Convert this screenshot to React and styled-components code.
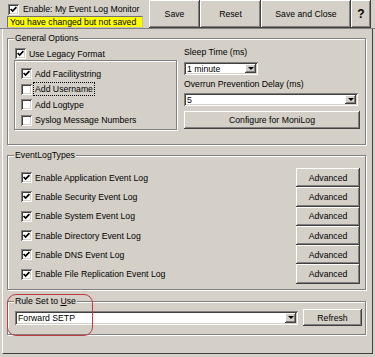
import styled, { createGlobalStyle, css } from "styled-components";

const GlobalStyle = createGlobalStyle`
  html, body {
    margin: 0;
    padding: 0;
    background: #d4d0c8;
  }
  body {
    font-family: "Liberation Sans", Arial, sans-serif;
    font-size: 8.7px;
    color: #000;
  }
  * { box-sizing: border-box; }
`;

const raised = css`
  box-shadow: inset -1px -1px #404040, inset 1px 1px #fff, inset -2px -2px #808080;
`;

const sunken = css`
  box-shadow: inset 1px 1px #808080, inset -1px -1px #fff, inset 2px 2px #404040,
    inset -2px -2px #d4d0c8;
`;

const Window = styled.div`
  width: 375px;
  height: 357px;
  display: flex;
  flex-direction: column;
`;

const TopBar = styled.div`
  height: 29px;
  display: flex;
  border-bottom: 1px solid #808080;
`;

const StatusArea = styled.div`
  width: 149px;
  padding: 4px 0 0 7px;
  display: flex;
  flex-direction: column;
`;

const EnableRow = styled.div`
  display: flex;
  align-items: center;
  gap: 4px;
  padding-left: 1px;
  height: 11px;
  line-height: 11px;
  white-space: nowrap;
`;

const Warning = styled.div`
  width: 136px;
  height: 12px;
  margin-top: 1px;
  background: #ffff00;
  border: 1px solid;
  border-color: #707070 #c0c0c0 #c0c0c0 #707070;
  padding-left: 2px;
  line-height: 10px;
  white-space: nowrap;
`;

const BarButton = styled.button`
  width: ${(p) => p.$w}px;
  height: 28px;
  padding: 0;
  border: none;
  background: #d4d0c8;
  font: inherit;
  color: #000;
  ${raised}
  ${(p) =>
    p.$bold &&
    css`
      font-weight: bold;
      font-size: 12px;
    `}
`;

const Main = styled.div`
  flex: 1;
  margin: 0 2px 3px;
  border-left: 1px solid #fff;
  border-right: 1px solid #404040;
  border-bottom: 1px solid #404040;
  padding: 8px 6px 0 4px;
  display: flex;
  flex-direction: column;
`;

const Group = styled.div`
  position: relative;
  height: ${(p) => p.$h}px;
  margin-top: ${(p) => p.$mt}px;
  border: 1px solid #808080;
  box-shadow: inset 1px 1px #fff, 1px 1px #fff;
`;

const GroupTitle = styled.div`
  position: absolute;
  top: -6px;
  left: 6px;
  padding: 0 1px;
  line-height: 11px;
  background: #d4d0c8;
  white-space: nowrap;
  z-index: 1;
`;

const GeneralGrid = styled.div`
  display: grid;
  grid-template-columns: 163px 176px;
  column-gap: 7px;
  padding: 0 5px 0 6px;
`;

const Column = styled.div`
  display: flex;
  flex-direction: column;
`;

const CheckRow = styled.div`
  display: flex;
  align-items: center;
  gap: 3px;
  height: ${(p) => p.$h || 11}px;
  margin-top: ${(p) => p.$mt || 0}px;
  padding-left: ${(p) => p.$pl || 0}px;
  white-space: nowrap;
`;

const InnerBox = styled.div`
  height: 70px;
  margin-top: 1px;
  padding: 5px 0 0 6px;
  border: 1px solid #808080;
  box-shadow: inset 1px 1px #fff, 1px 1px #fff;
`;

const CheckBox = styled.span`
  width: 11px;
  height: 11px;
  flex: none;
  background: #fff;
  display: grid;
  place-items: center;
  ${sunken}
`;

const Focus = styled.span`
  outline: 1px dotted #000;
  outline-offset: 1px;
`;

const FieldLabel = styled.div`
  line-height: 11px;
  margin-top: ${(p) => p.$mt}px;
  white-space: nowrap;
`;

const Select = styled.div`
  width: ${(p) => p.$w}px;
  height: ${(p) => p.$h}px;
  margin-top: ${(p) => p.$mt || 0}px;
  flex: none;
  display: flex;
  padding: 2px;
  background: #fff;
  ${sunken}
`;

const SelectValue = styled.div`
  flex: 1;
  display: flex;
  align-items: center;
  padding-left: 1px;
  white-space: nowrap;
`;

const DropButton = styled.div`
  width: 11px;
  background: #d4d0c8;
  display: grid;
  place-items: center;
  ${raised}
  &::after {
    content: "";
    width: 0;
    height: 0;
    border-left: 3px solid transparent;
    border-right: 3px solid transparent;
    border-top: 3px solid #000;
  }
`;

const PushButton = styled.button`
  width: ${(p) => p.$w}px;
  height: ${(p) => p.$h}px;
  margin-top: ${(p) => p.$mt || 0}px;
  flex: none;
  padding: 0;
  border: none;
  background: #d4d0c8;
  font: inherit;
  color: #000;
  white-space: nowrap;
  ${raised}
`;

const LogList = styled.div`
  padding: 12px 5px 0 13px;
`;

const LogRow = styled.div`
  height: 19.3px;
  display: flex;
  align-items: center;
  justify-content: space-between;
`;

const RuleRow = styled.div`
  height: 17px;
  margin-top: 7px;
  padding: 0 3px 0 7px;
  display: flex;
  align-items: center;
  gap: 5px;
`;

const Annotation = styled.div`
  position: absolute;
  left: -1px;
  top: -8px;
  width: 86px;
  height: 42px;
  border: 1.5px solid #c23a3e;
  border-radius: 9px;
  pointer-events: none;
`;

const Check = ({ checked }) => (
  <CheckBox>
    {checked && (
      <svg width="7" height="7" viewBox="0 0 7 7">
        <path d="M0.6 3 L2.6 5 L6.4 1.2" fill="none" stroke="#000" strokeWidth="1.7" />
      </svg>
    )}
  </CheckBox>
);

const logTypes = [
  "Enable Application Event Log",
  "Enable Security Event Log",
  "Enable System Event Log",
  "Enable Directory Event Log",
  "Enable DNS Event Log",
  "Enable File Replication Event Log",
];

function App() {
  return (
    <Window>
      <GlobalStyle />
      <TopBar>
        <StatusArea>
          <EnableRow>
            <Check checked />
            Enable: My Event Log Monitor
          </EnableRow>
          <Warning>You have changed but not saved</Warning>
        </StatusArea>
        <BarButton $w={51}>Save</BarButton>
        <BarButton $w={61}>Reset</BarButton>
        <BarButton $w={90}>Save and Close</BarButton>
        <BarButton $w={20} $bold>?</BarButton>
      </TopBar>

      <Main>
        <Group $h={107} $mt={1}>
          <GroupTitle>General Options</GroupTitle>
          <GeneralGrid>
            <Column>
              <CheckRow $mt={9} $pl={1}>
                <Check checked />
                Use Legacy Format
              </CheckRow>
              <InnerBox>
                <CheckRow $h={15.5}>
                  <Check checked />
                  Add Facilitystring
                </CheckRow>
                <CheckRow $h={15.5}>
                  <Check />
                  <Focus>Add Username</Focus>
                </CheckRow>
                <CheckRow $h={15.5}>
                  <Check />
                  Add Logtype
                </CheckRow>
                <CheckRow $h={15.5}>
                  <Check />
                  Syslog Message Numbers
                </CheckRow>
              </InnerBox>
            </Column>
            <Column>
              <FieldLabel $mt={8}>Sleep Time (ms)</FieldLabel>
              <Select $w={74} $h={13} $mt={4}>
                <SelectValue>1 minute</SelectValue>
                <DropButton />
              </Select>
              <FieldLabel $mt={4}>Overrun Prevention Delay (ms)</FieldLabel>
              <Select $w={174} $h={13} $mt={3}>
                <SelectValue>5</SelectValue>
                <DropButton />
              </Select>
              <PushButton $w={176} $h={18} $mt={5}>
                Configure for MoniLog
              </PushButton>
            </Column>
          </GeneralGrid>
        </Group>

        <Group $h={135} $mt={10}>
          <GroupTitle>EventLogTypes</GroupTitle>
          <LogList>
            {logTypes.map((t) => (
              <LogRow key={t}>
                <CheckRow>
                  <Check checked />
                  {t}
                </CheckRow>
                <PushButton $w={64} $h={19.3}>
                  Advanced
                </PushButton>
              </LogRow>
            ))}
          </LogList>
        </Group>

        <Group $h={34} $mt={11}>
          <GroupTitle>
            Rule Set to <u>U</u>se
          </GroupTitle>
          <RuleRow>
            <Select $w={283} $h={14}>
              <SelectValue>Forward SETP</SelectValue>
              <DropButton />
            </Select>
            <PushButton $w={59} $h={17}>
              Refresh
            </PushButton>
          </RuleRow>
          <Annotation />
        </Group>
      </Main>
    </Window>
  );
}

export default App;
